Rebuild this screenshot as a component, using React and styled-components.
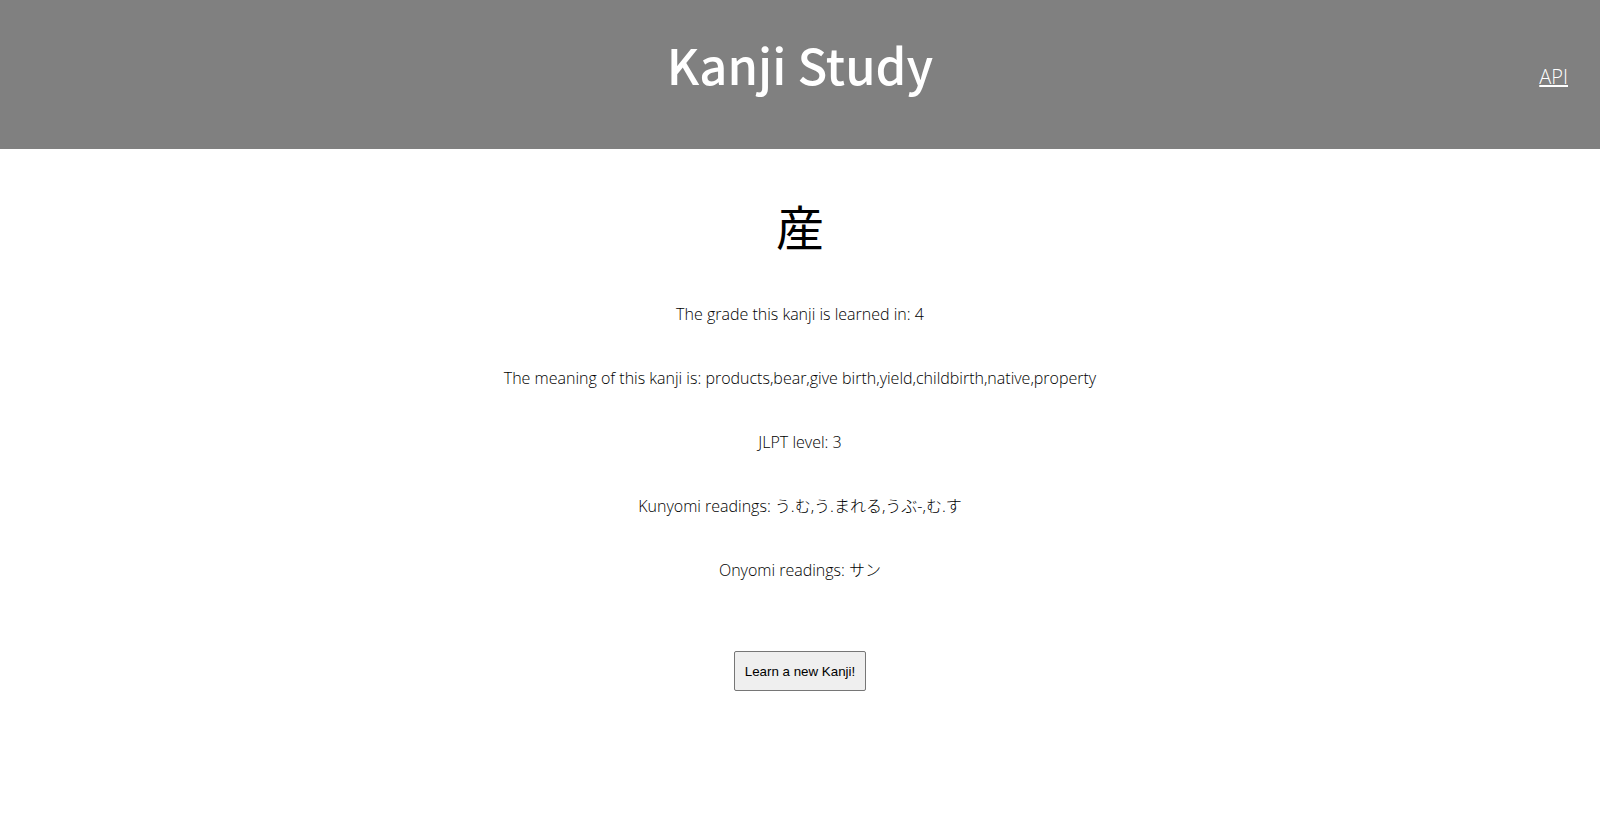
import React from 'react';
import styled, { createGlobalStyle } from 'styled-components';

const GlobalStyle = createGlobalStyle`
  body {
    margin: 0;
    background: #ffffff;
    font-family: 'Open Sans', 'Noto Sans CJK JP', sans-serif;
  }
`;

const Header = styled.header`
  display: grid;
  grid-template-columns: 1fr auto 1fr;
  align-items: center;
  height: 149px;
  padding: 0 32px;
  background-color: #808080;
  box-sizing: border-box;
`;

const Title = styled.h1`
  grid-column: 2;
  margin: 0 0 22px;
  font-family: 'Noto Sans CJK JP', 'Noto Sans', sans-serif;
  font-size: 49px;
  font-weight: 500;
  line-height: 1;
  color: #ffffff;
`;

const ApiLink = styled.a`
  grid-column: 3;
  justify-self: end;
  margin-top: 4px;
  font-family: 'Open Sans', sans-serif;
  font-size: 20px;
  font-weight: 300;
  color: #ffffff;
  text-decoration: underline;
`;

const Main = styled.main`
  display: flex;
  flex-direction: column;
  align-items: center;
  padding-top: 44px;
`;

const Kanji = styled.div`
  font-family: 'Noto Sans CJK JP', sans-serif;
  font-size: 48px;
  line-height: 64px;
  color: #000000;
`;

const InfoList = styled.div`
  display: flex;
  flex-direction: column;
  align-items: center;
  gap: 42px;
  margin-top: 46px;
`;

const Info = styled.p`
  margin: 0;
  font-family: 'Open Sans', 'Noto Sans CJK JP', sans-serif;
  font-size: 16px;
  font-weight: 300;
  line-height: 22px;
  color: #000000;
`;

const NewButton = styled.button`
  margin-top: 70px;
  height: 40px;
  padding: 0 10px;
  font-family: 'Liberation Sans', Arial, sans-serif;
  font-size: 13.33px;
  color: #000000;
  background-color: #efefef;
  border: 1px solid #767676;
  border-radius: 2px;
  cursor: pointer;
`;

const kanji = {
  character: '産',
  grade: 4,
  meanings: 'products,bear,give birth,yield,childbirth,native,property',
  jlpt: 3,
  kunyomi: 'う.む,う.まれる,うぶ-,む.す',
  onyomi: 'サン',
};

export default function App() {
  return (
    <>
      <GlobalStyle />
      <Header>
        <Title>Kanji Study</Title>
        <ApiLink href="#">API</ApiLink>
      </Header>
      <Main>
        <Kanji>{kanji.character}</Kanji>
        <InfoList>
          <Info>The grade this kanji is learned in: {kanji.grade}</Info>
          <Info>The meaning of this kanji is: {kanji.meanings}</Info>
          <Info>JLPT level: {kanji.jlpt}</Info>
          <Info>Kunyomi readings: {kanji.kunyomi}</Info>
          <Info>Onyomi readings: {kanji.onyomi}</Info>
        </InfoList>
        <NewButton type="button">Learn a new Kanji!</NewButton>
      </Main>
    </>
  );
}
